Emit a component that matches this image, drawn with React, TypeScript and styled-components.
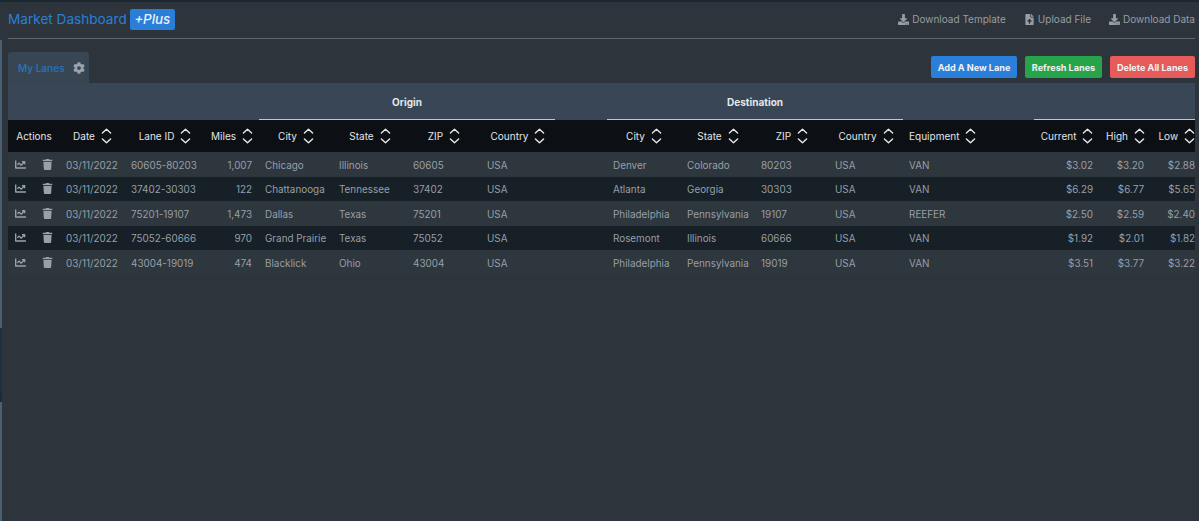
import React from "react";
import styled, { createGlobalStyle } from "styled-components";
import { FaChartLine, FaCog, FaDownload, FaFileUpload, FaTrash } from "react-icons/fa";

const Global = createGlobalStyle`
  html, body { margin: 0; padding: 0; background: #2d343b; height: 100%; overflow: hidden; }
  #root { height: 100%; }
  * { box-sizing: border-box; }
`;

const Page = styled.div`
  height: 521px;
  display: flex;
  flex-direction: column;
  background: #2d343b;
  font-family: Inter, "Liberation Sans", sans-serif;
`;
const TopStrip = styled.div`
  height: 2px;
  flex: none;
  background: #1b2832;
`;
const Body = styled.div`
  flex: 1;
  display: flex;
`;
const Rail = styled.div`
  width: 2px;
  flex: none;
  background: linear-gradient(
    #2d343b 0 38px,
    #4a6072 38px 326px,
    #1d3143 326px 390px,
    #1a2a38 390px 400px,
    #4a6072 400px
  );
`;
const Main = styled.main`
  flex: 1;
  min-width: 0;
  padding: 0 4px 0 6px;
`;
const Header = styled.header`
  height: 37px;
  padding-bottom: 2px;
  display: flex;
  align-items: center;
  justify-content: space-between;
  border-bottom: 1px solid #5f686f;
`;
const Brand = styled.div`
  display: flex;
  align-items: center;
  gap: 3px;
`;
const Title = styled.h1`
  margin: 0;
  font-size: 13.6px;
  font-weight: 400;
  color: #2a80d6;
`;
const Badge = styled.span`
  width: 45px;
  height: 21px;
  display: flex;
  align-items: center;
  justify-content: center;
  border-radius: 2px;
  background: #2a7ed8;
  color: #e9f1f9;
  font-size: 13.4px;
  font-style: italic;
  font-weight: 500;
`;
const HeaderLinks = styled.nav`
  display: flex;
  gap: 18px;
`;
const HeaderLink = styled.a`
  display: flex;
  align-items: center;
  gap: 3px;
  font-size: 10px;
  color: #969ea5;
  svg { font-size: 11px; }
`;
const TabBar = styled.div`
  height: 44px;
  display: flex;
  align-items: flex-end;
  justify-content: space-between;
`;
const Tab = styled.div`
  width: 81px;
  height: 31px;
  padding-left: 10px;
  display: flex;
  align-items: center;
  gap: 8px;
  border-radius: 3px 3px 0 0;
  background: #384553;
  color: #2a6fb4;
  font-size: 10px;
  font-weight: 600;
  svg { color: #99a3ac; font-size: 12px; }
`;
const Actions = styled.div`
  display: flex;
  gap: 8px;
  padding-bottom: 5px;
`;
const ActionButton = styled.button<{ $bg: string; $w: number }>`
  width: ${(p) => p.$w}px;
  height: 22px;
  padding: 0;
  border: 0;
  border-radius: 2px;
  background: ${(p) => p.$bg};
  color: #eef2f5;
  font-family: inherit;
  font-size: 9.1px;
  font-weight: 700;
`;
const Table = styled.table`
  width: 1187px;
  table-layout: fixed;
  border-collapse: separate;
  border-spacing: 0;
`;
const GroupCell = styled.th<{ $line?: boolean }>`
  height: 37px;
  padding: 2px 0 0;
  background: #394655;
  color: #e4e7ea;
  font-size: 10px;
  font-weight: 700;
  text-align: center;
  border-bottom: 1px solid ${(p) => (p.$line ? "#c2c7cb" : "#394655")};
`;
const SortCell = styled.th`
  height: 32px;
  padding: 0 0 1px;
  background: #0c0f13;
  color: #e2e5e8;
  font-size: 10px;
  font-weight: 400;
`;
const SortInner = styled.span<{ $align: "center" | "flex-end" | "flex-start" }>`
  display: flex;
  align-items: center;
  justify-content: ${(p) => p.$align};
  gap: 6px;
  padding-left: ${(p) => (p.$align === "flex-start" ? 6 : 0)}px;
`;
const Row = styled.tr<{ $alt: boolean }>`
  background: ${(p) => (p.$alt ? "#162026" : "#2e363e")};
`;
const Cell = styled.td<{ $right?: boolean; $flush?: boolean }>`
  height: 24.5px;
  padding: 1px ${(p) => (p.$flush ? 0 : 7)}px 0 ${(p) => (p.$flush ? 0 : 6)}px;
  color: #989fa6;
  font-size: 9.9px;
  white-space: nowrap;
  text-align: ${(p) => (p.$right ? "right" : "left")};
`;
const ActionCell = styled.td`
  height: 24.5px;
  padding: 0;
`;
const IconPair = styled.span`
  display: flex;
  align-items: center;
  gap: 16px;
  padding-left: 7px;
  color: #99a1a8;
  svg { font-size: 11px; flex: none; }
`;

const SortGlyph = () => (
  <svg width="11" height="16" viewBox="0 0 11 16" fill="none" stroke="#e6e9eb" strokeWidth="1.4" strokeLinecap="round" strokeLinejoin="round">
    <path d="M1.4 5 5.5 1.2 9.6 5" />
    <path d="M1.4 11 5.5 14.8 9.6 11" />
  </svg>
);

const widths = [52, 65, 80, 54, 74, 74, 74, 74, 52, 74, 74, 74, 74, 131, 66, 51, 44];
const sortCols = [
  "Date", "Lane ID", "Miles", "City", "State", "ZIP", "Country", "",
  "City", "State", "ZIP", "Country", "Equipment", "Current", "High", "Low",
];
const rows = [
  ["03/11/2022", "60605-80203", "1,007", "Chicago", "Illinois", "60605", "USA", "Denver", "Colorado", "80203", "USA", "VAN", "$3.02", "$3.20", "$2.88"],
  ["03/11/2022", "37402-30303", "122", "Chattanooga", "Tennessee", "37402", "USA", "Atlanta", "Georgia", "30303", "USA", "VAN", "$6.29", "$6.77", "$5.65"],
  ["03/11/2022", "75201-19107", "1,473", "Dallas", "Texas", "75201", "USA", "Philadelphia", "Pennsylvania", "19107", "USA", "REEFER", "$2.50", "$2.59", "$2.40"],
  ["03/11/2022", "75052-60666", "970", "Grand Prairie", "Texas", "75052", "USA", "Rosemont", "Illinois", "60666", "USA", "VAN", "$1.92", "$2.01", "$1.82"],
  ["03/11/2022", "43004-19019", "474", "Blacklick", "Ohio", "43004", "USA", "Philadelphia", "Pennsylvania", "19019", "USA", "VAN", "$3.51", "$3.77", "$3.22"],
];

const alignFor = (c: string, i: number) =>
  c === "Equipment" ? "flex-start" : i === 15 ? "flex-end" : "center";

export default function App() {
  return (
    <Page>
      <Global />
      <TopStrip />
      <Body>
        <Rail />
        <Main>
          <Header>
            <Brand>
              <Title>Market Dashboard</Title>
              <Badge>+Plus</Badge>
            </Brand>
            <HeaderLinks>
              <HeaderLink><FaDownload />Download Template</HeaderLink>
              <HeaderLink><FaFileUpload />Upload File</HeaderLink>
              <HeaderLink><FaDownload />Download Data</HeaderLink>
            </HeaderLinks>
          </Header>
          <TabBar>
            <Tab>My Lanes<FaCog /></Tab>
            <Actions>
              <ActionButton $bg="#2a7fdb" $w={86}>Add A New Lane</ActionButton>
              <ActionButton $bg="#27a34a" $w={77}>Refresh Lanes</ActionButton>
              <ActionButton $bg="#e65a5a" $w={85}>Delete All Lanes</ActionButton>
            </Actions>
          </TabBar>
          <Table>
            <colgroup>
              {widths.map((w, i) => <col key={i} style={{ width: w }} />)}
            </colgroup>
            <thead>
              <tr>
                <GroupCell colSpan={4} />
                <GroupCell colSpan={4} $line>Origin</GroupCell>
                <GroupCell />
                <GroupCell colSpan={4} $line>Destination</GroupCell>
                <GroupCell />
                <GroupCell colSpan={3} $line />
              </tr>
              <tr>
                <SortCell>Actions</SortCell>
                {sortCols.map((c, i) => (
                  <SortCell key={i}>
                    {c && <SortInner $align={alignFor(c, i)}>{c}<SortGlyph /></SortInner>}
                  </SortCell>
                ))}
              </tr>
            </thead>
            <tbody>
              {rows.map((r, ri) => (
                <Row key={ri} $alt={ri % 2 === 1}>
                  <ActionCell>
                    <IconPair><FaChartLine /><FaTrash /></IconPair>
                  </ActionCell>
                  {r.slice(0, 7).map((v, i) => (
                    <Cell key={i} $right={i === 2}>{v}</Cell>
                  ))}
                  <Cell />
                  {r.slice(7).map((v, i) => (
                    <Cell key={i} $right={i >= 5} $flush={i === 7}>{v}</Cell>
                  ))}
                </Row>
              ))}
            </tbody>
          </Table>
        </Main>
      </Body>
    </Page>
  );
}
